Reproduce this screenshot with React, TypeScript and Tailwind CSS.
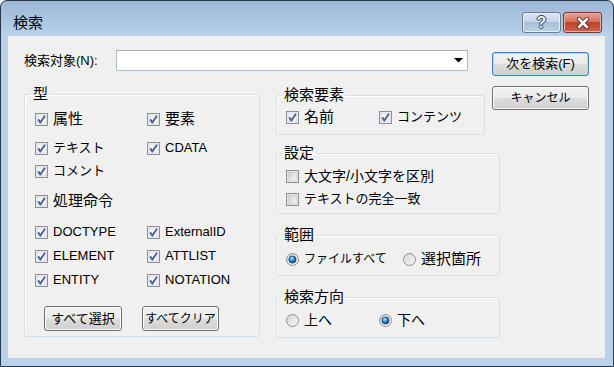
import type { ReactNode } from 'react';

const FONT = "font-['Liberation_Sans','Noto_Sans_CJK_JP',sans-serif]";

function CheckBox({ checked }: { checked: boolean }) {
  return (
    <svg width="13" height="13" viewBox="0 0 13 13" className="shrink-0">
      <defs>
        <linearGradient id="cbFill" x1="0" y1="0" x2="1" y2="1">
          <stop offset="0" stopColor="#cdd0d6" />
          <stop offset="1" stopColor="#f7f7f7" />
        </linearGradient>
      </defs>
      <rect x="0.5" y="0.5" width="12" height="12" fill="#f4f4f4" stroke="#8e8f8f" />
      <rect x="2" y="2" width="9" height="9" fill={checked ? '#f2f3f5' : 'url(#cbFill)'} stroke={checked ? '#c9ccd2' : '#b5b8bd'} strokeWidth="0.6" />
      {checked && <path d="M3.2 6.4 L5.4 9.6 L9.9 2.8" stroke="#4a5f97" strokeWidth="1.9" fill="none" strokeLinejoin="round" />}
    </svg>
  );
}

function Radio({ checked }: { checked: boolean }) {
  return (
    <svg width="13" height="13" viewBox="0 0 13 13" className="shrink-0">
      <defs>
        <linearGradient id="rbFill" x1="0" y1="0" x2="1" y2="1">
          <stop offset="0" stopColor="#d2d4d8" />
          <stop offset="1" stopColor="#fafafa" />
        </linearGradient>
        <radialGradient id="rbDot" cx="0.4" cy="0.35" r="0.7">
          <stop offset="0" stopColor="#b4ecff" />
          <stop offset="0.45" stopColor="#2c8fd6" />
          <stop offset="1" stopColor="#0b3a70" />
        </radialGradient>
      </defs>
      <circle cx="6.5" cy="6.5" r="6" fill="url(#rbFill)" stroke="#8e8f8f" />
      {checked && <circle cx="6.5" cy="6.5" r="3.6" fill="url(#rbDot)" stroke="#17406e" strokeWidth="0.8" />}
    </svg>
  );
}

function Option({ label, checked = true, radio = false, size = 'text-[13px]' }: { label: string; checked?: boolean; radio?: boolean; size?: string }) {
  return (
    <div className="flex items-center h-[14px]">
      {radio ? <Radio checked={checked} /> : <CheckBox checked={checked} />}
      <span className={`ml-[5px] whitespace-nowrap leading-[16px] ${size}`}>{label}</span>
    </div>
  );
}

function Group({ title, className, legendMl, children }: { title: string; className: string; legendMl: string; children: ReactNode }) {
  return (
    <fieldset className={`border border-[#d5dfe5] rounded-[3px] shadow-[inset_1px_1px_0_#fff] ${className}`}>
      <legend className={`${legendMl} px-[2px] text-[15px] leading-[16px]`}>{title}</legend>
      {children}
    </fieldset>
  );
}

function Button({ label, className, size = 'text-[13px]', primary = false }: { label: string; className: string; size?: string; primary?: boolean }) {
  return (
    <button
      className={`${className} ${size} rounded-[3px] border ${primary ? 'border-[#3c7fb1] shadow-[inset_0_0_0_1px_#a8e2f8]' : 'border-[#707070] shadow-[inset_0_0_0_1px_#fbfbfb]'} bg-[linear-gradient(#f2f2f2,#ebebeb_48%,#dddddd_52%,#cfcfcf)] leading-[16px] flex items-center justify-center whitespace-nowrap`}
    >
      {label}
    </button>
  );
}

export default function App() {
  return (
    <div className="w-[614px] h-[367px] bg-white">
      <div className={`w-[614px] h-[367px] flex flex-col border border-[#23364a] rounded-t-[7px] bg-[linear-gradient(#9cb7d5_0px,#b9d1ea_34px,#b9d1ea_100%)] text-black ${FONT}`}>
        {/* title bar */}
        <div className="h-[35px] shrink-0 flex items-start">
          <div className="ml-[12px] mt-[13px] text-[15px] leading-[18px]">検索</div>
          <div className="ml-auto mr-[11px] mt-[11px] flex gap-[2px]">
            <div className="w-[39px] h-[21px] rounded-[3px] border border-[#6b7d93] bg-[linear-gradient(#dce7f3,#c4d5e9_45%,#a8bfd9_50%,#bcd1e8)] flex items-center justify-center shadow-[inset_0_0_0_1px_#e6eef7]">
              <span className="text-[16px] leading-[16px] font-bold text-[#e9edf2] [text-shadow:1px_0_0_#3a4756,-1px_0_0_#3a4756,0_1px_0_#3a4756,0_-1px_0_#3a4756]">?</span>
            </div>
            <div className="w-[39px] h-[21px] rounded-[3px] border border-[#6a3a33] bg-[linear-gradient(#e8a597,#d4715f_45%,#c2412d_50%,#d1604d)] flex items-center justify-center shadow-[inset_0_0_0_1px_#eab3a8]">
              <svg width="14" height="12" viewBox="0 0 14 12">
                <path d="M3 2 L11 10 M11 2 L3 10" stroke="#4a2420" strokeWidth="4.2" strokeLinecap="round" />
                <path d="M3 2 L11 10 M11 2 L3 10" stroke="#ffffff" strokeWidth="2.6" strokeLinecap="round" />
              </svg>
            </div>
          </div>
        </div>

        {/* client area */}
        <div className="ml-[7px] mr-[8px] mb-[8px] flex-1 bg-[#f0f0f0] flex pt-[14px] pl-[16px]">
          <div className="w-[476px] flex flex-col">
            <div className="flex items-center h-[21px]">
              <span className="w-[92px] text-[13px] leading-[16px] whitespace-nowrap">検索対象(N):</span>
              <div className="w-[352px] h-[21px] bg-white border border-[#a9c0d6] border-t-[#9fb3c7] flex items-center justify-end pr-[4px]">
                <svg width="9" height="5" viewBox="0 0 9 5">
                  <path d="M0 0 H9 L4.5 4.5 Z" fill="#000" />
                </svg>
              </div>
            </div>

            <div className="flex mt-[15px]">
              <Group title="型" className="w-[236px] h-[251px]" legendMl="ml-[6px]">
                <div className="pl-[10px] flex flex-col">
                  <div className="flex mt-[10px]">
                    <div className="w-[112px]"><Option label="属性" size="text-[15px]" /></div>
                    <Option label="要素" size="text-[15px]" />
                  </div>
                  <div className="flex mt-[15px]">
                    <div className="w-[112px]"><Option label="テキスト" /></div>
                    <Option label="CDATA" />
                  </div>
                  <div className="mt-[9px]"><Option label="コメント" /></div>
                  <div className="mt-[16px]"><Option label="処理命令" size="text-[15px]" /></div>
                  <div className="flex mt-[17px]">
                    <div className="w-[112px]"><Option label="DOCTYPE" /></div>
                    <Option label="ExternalID" />
                  </div>
                  <div className="flex mt-[10px]">
                    <div className="w-[112px]"><Option label="ELEMENT" /></div>
                    <Option label="ATTLIST" />
                  </div>
                  <div className="flex mt-[10px]">
                    <div className="w-[112px]"><Option label="ENTITY" /></div>
                    <Option label="NOTATION" />
                  </div>
                  <div className="flex mt-[19px] ml-[9px] gap-[20px]">
                    <Button label="すべて選択" className="w-[78px] h-[25px]" />
                    <Button label="すべてクリア" className="w-[77px] h-[25px]" size="text-[12px]" />
                  </div>
                </div>
              </Group>

              <div className="ml-[16px] w-[224px] flex flex-col">
                <Group title="検索要素" className="mt-[1px] w-[209px] h-[48px]" legendMl="ml-[5px]">
                  <div className="pl-[9px] flex mt-[7px]">
                    <div className="w-[93px]"><Option label="名前" size="text-[15px]" /></div>
                    <Option label="コンテンツ" />
                  </div>
                </Group>
                <Group title="設定" className="mt-[10px] w-[224px] h-[69px]" legendMl="ml-[5px]">
                  <div className="pl-[9px] flex flex-col">
                    <div className="mt-[8px]"><Option label="大文字/小文字を区別" checked={false} size="text-[14px]" /></div>
                    <div className="mt-[9px]"><Option label="テキストの完全一致" checked={false} /></div>
                  </div>
                </Group>
                <Group title="範囲" className="mt-[13px] w-[224px] h-[49px]" legendMl="ml-[5px]">
                  <div className="pl-[9px] flex mt-[9px]">
                    <div className="w-[117px]"><Option label="ファイルすべて" radio size="text-[12px]" /></div>
                    <Option label="選択箇所" radio checked={false} size="text-[15px]" />
                  </div>
                </Group>
                <Group title="検索方向" className="mt-[13px] w-[224px] h-[49px]" legendMl="ml-[5px]">
                  <div className="pl-[9px] flex mt-[8px]">
                    <div className="w-[93px]"><Option label="上へ" radio checked={false} size="text-[14px]" /></div>
                    <Option label="下へ" radio size="text-[14px]" />
                  </div>
                </Group>
              </div>
            </div>
          </div>

          <div className="ml-[-8px] mt-[2px] flex flex-col gap-[10px]">
            <Button label="次を検索(F)" className="w-[97px] h-[24px]" primary />
            <Button label="キャンセル" className="w-[97px] h-[24px]" size="text-[12px]" />
          </div>
        </div>
      </div>
    </div>
  );
}
